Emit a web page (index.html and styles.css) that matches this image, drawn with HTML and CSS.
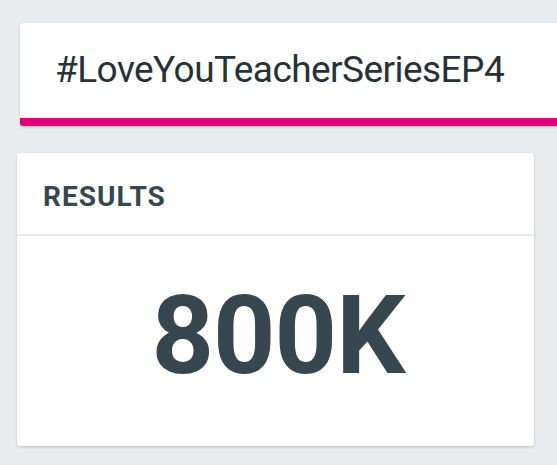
FILE: index.html
```html
<!DOCTYPE html>
<html>
<head>
<meta charset="utf-8">
<link rel="stylesheet" href="styles.css">
</head>
<body>
<div class="page">
  <div class="search-card">
    <div class="search-text">#LoveYouTeacherSeriesEP4</div>
  </div>
  <div class="results-card">
    <div class="results-head">RESULTS</div>
    <div class="results-body">800K</div>
  </div>
</div>
</body>
</html>
```
FILE: styles.css
```css
html, body {
  margin: 0;
  padding: 0;
  background: #e9ecef;
  overflow: hidden;
}
.page {
  width: 557px;
  height: 465px;
  font-family: Roboto, "Liberation Sans", sans-serif;
  padding-top: 23px;
  box-sizing: border-box;
}
.search-card {
  margin-left: 20px;
  width: 560px;
  height: 103px;
  background: #fff;
  border-radius: 3px 0 0 3px;
  border-bottom: 8px solid #e2007a;
  box-sizing: border-box;
  box-shadow: 0 1px 3px rgba(0,0,0,0.18);
  padding: 27px 0 0 35px;
}
.search-text {
  font-size: 37px;
  letter-spacing: -0.55px;
  color: #263238;
  line-height: 40px;
}
.results-card {
  margin: 27px 0 0 17px;
  width: 517px;
  height: 293px;
  background: #fff;
  border-radius: 3px;
  box-shadow: 0 1px 3px rgba(0,0,0,0.18);
  display: flex;
  flex-direction: column;
}
.results-head {
  height: 83px;
  box-sizing: border-box;
  border-bottom: 2px solid #e8eaec;
  padding: 29px 0 0 26px;
  font-size: 28px;
  font-weight: 700;
  letter-spacing: 1px;
  color: #37474f;
  line-height: 30px;
}
.results-body {
  font-size: 109px;
  font-weight: 700;
  letter-spacing: -1px;
  color: #37474f;
  text-align: center;
  line-height: 110px;
  padding-top: 45px;
  padding-left: 5px;
}
```
